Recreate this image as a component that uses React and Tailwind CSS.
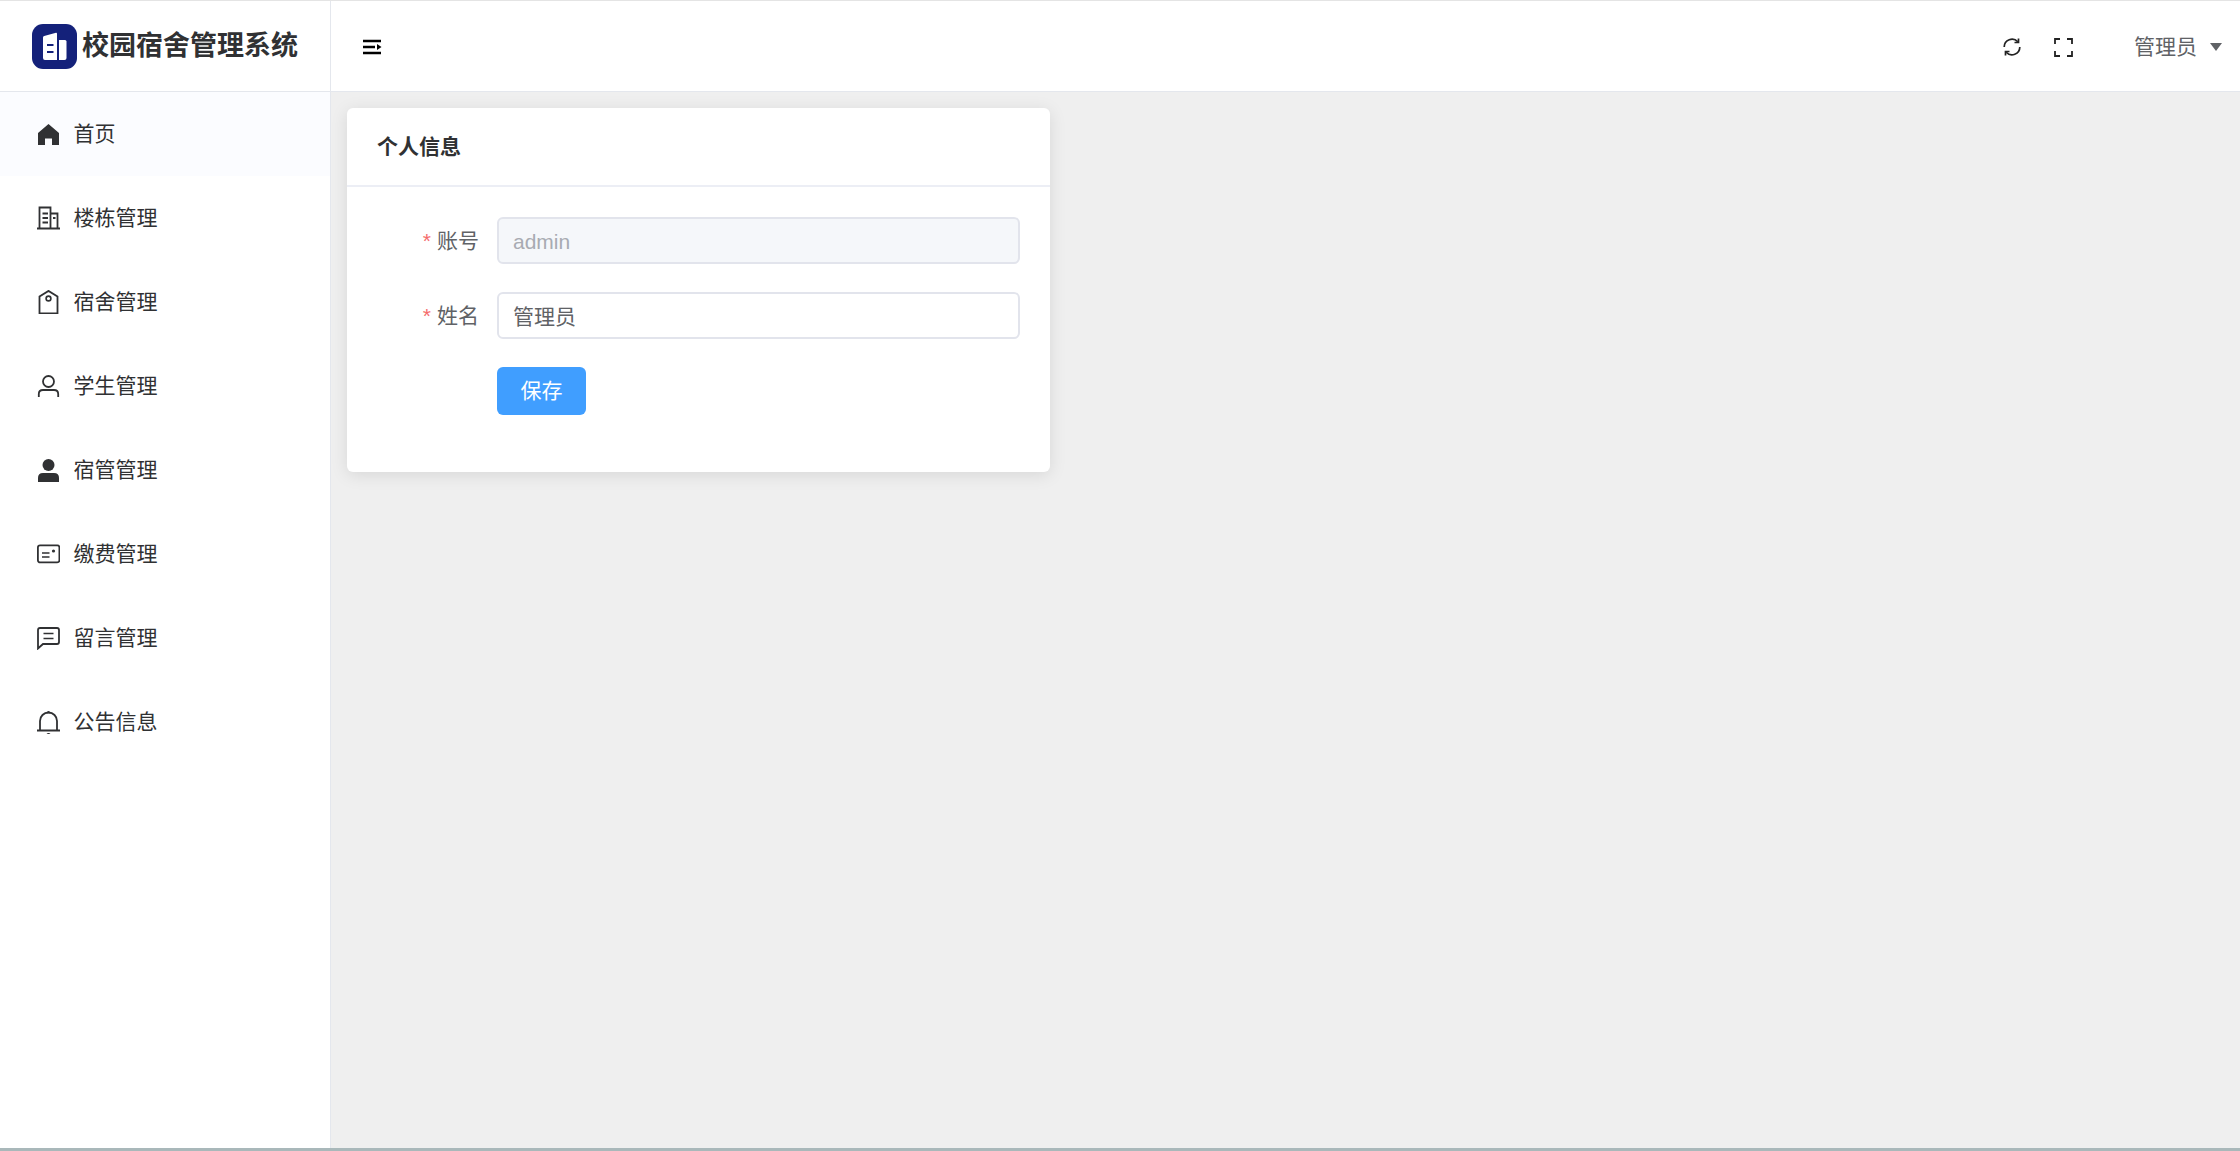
import React from "react";

const Icon = ({ children }) => (
  <svg width="24" height="24" viewBox="0 0 24 24" className="shrink-0 text-[#303133]">
    {children}
  </svg>
);

const line = { fill: "none", stroke: "currentColor", strokeWidth: 1.8 };

const HomeIcon = () => (
  <Icon>
    <path fill="currentColor" d="M12.5 2 L23 11 V23 H16 V16.5 H9 V23 H2 V11 Z" />
  </Icon>
);

const BuildingIcon = () => (
  <Icon>
    <path {...line} strokeWidth="2" d="M1 22.5 H24" />
    <path {...line} d="M3.5 22 V1.5 H14.5 V22 M14.5 7.5 H21.5 V22 M6.5 7.5 H12 M6.5 12 H12 M6.5 16.5 H12 M17 12 H19.5" />
  </Icon>
);

const TagIcon = () => (
  <Icon>
    <path {...line} d="M3.5 23.5 V6.5 L12.5 0.9 L21.5 6.5 V23.5 Z" />
    <circle {...line} strokeWidth="1.6" cx="12.5" cy="8.5" r="2.4" />
  </Icon>
);

const UserIcon = () => (
  <Icon>
    <circle {...line} cx="12.5" cy="7.5" r="5.5" />
    <path {...line} d="M2.8 23 V20 Q2.8 16 7 16 H18 Q22.2 16 22.2 20 V23" />
  </Icon>
);

const UserFilledIcon = () => (
  <Icon>
    <circle fill="currentColor" cx="12.5" cy="7" r="6" />
    <path fill="currentColor" d="M2 24 V20 Q2 15 7 15 H18 Q23 15 23 20 V24 Z" />
  </Icon>
);

const PostcardIcon = () => (
  <Icon>
    <rect {...line} x="1.9" y="3.4" width="21.5" height="17" rx="2.2" />
    <path {...line} strokeWidth="1.6" d="M6 11 H13.5 M6 15 H13.5" />
    <circle fill="currentColor" cx="17.5" cy="9" r="1.6" />
  </Icon>
);

const ChatIcon = () => (
  <Icon>
    <path {...line} d="M2 22.5 V4 Q2 2 4 2 H21 Q23 2 23 4 V16 Q23 18 21 18 H7 Z" />
    <path {...line} strokeWidth="1.6" d="M7.5 7.5 H17.5 M7.5 12.5 H17.5" />
  </Icon>
);

const BellIcon = () => (
  <Icon>
    <path {...line} d="M1 20.5 H24 M4 20.5 V11 A8.5 8.5 0 0 1 21 11 V20.5" />
    <path fill="currentColor" d="M11 2.4 A1.5 1.5 0 0 1 14 2.4 V3.2 H11 Z M10.5 23 H14.5 L12.5 24.5 Z" />
  </Icon>
);

const menus = [
  { name: "首页", icon: <HomeIcon />, active: true },
  { name: "楼栋管理", icon: <BuildingIcon /> },
  { name: "宿舍管理", icon: <TagIcon /> },
  { name: "学生管理", icon: <UserIcon /> },
  { name: "宿管管理", icon: <UserFilledIcon /> },
  { name: "缴费管理", icon: <PostcardIcon /> },
  { name: "留言管理", icon: <ChatIcon /> },
  { name: "公告信息", icon: <BellIcon /> },
];

const Logo = () => (
  <svg width="45" height="45" viewBox="0 0 45 45" className="shrink-0">
    <rect width="45" height="45" rx="11" fill="#14217a" />
    <path fill="#fff" d="M11 13.5 Q11 12.3 12.2 12 L24 8.8 Q25 8.6 25 9.8 V36 H13 Q11 36 11 34 Z" />
    <path fill="#fff" d="M27 16 H33 Q34.5 16 34.5 17.5 V34 Q34.5 36 32.5 36 H27 Z" />
    <path stroke="#14217a" strokeWidth="2" d="M15 21 H21.5 M15 28 H21.5" />
  </svg>
);

const Field = ({ label, value, disabled }) => (
  <div className="flex items-center">
    <label className="w-[120px] pr-[18px] text-right text-[21px] text-[#606266]">
      <span className="text-[#f56c6c] mr-[6px]">*</span>
      {label}
    </label>
    <input
      readOnly
      disabled={disabled}
      value={value}
      className={`w-[523px] h-[47px] px-[14px] text-[21px] rounded-[6px] border-2 border-[#e2e4ec] outline-none ${
        disabled ? "bg-[#f5f7fa] text-[#a8abb2] pt-[2px]" : "bg-white text-[#606266] pb-[2px]"
      }`}
    />
  </div>
);

const App = () => {
  return (
    <div className="h-screen flex flex-col overflow-hidden bg-white font-['Liberation_Sans','Noto_Sans_CJK_SC',sans-serif]">
      <div className="h-px bg-[#e4e4e4] shrink-0" />

      <header className="h-[91px] shrink-0 flex bg-white border-b border-[#e4e7ed]">
        <div className="w-[331px] shrink-0 flex items-center pl-[32px] gap-[5px] border-r-[1.5px] border-[#e4e7ed]">
          <Logo />
          <span className="text-[27px] font-bold text-[#303133] whitespace-nowrap">校园宿舍管理系统</span>
        </div>
        <div className="flex-1 flex items-center pl-[32px] pr-[18px] pt-[2px]">
          <svg width="19" height="16" viewBox="0 0 19 16" className="text-black">
            <path stroke="currentColor" strokeWidth="2.5" fill="none" d="M0 2 H18 M0 14 H18" />
            <path stroke="currentColor" strokeWidth="2.5" fill="none" d="M0 8 H12" />
            <path fill="currentColor" d="M14 5 L18.5 8 L14 11 Z" />
          </svg>
          <div className="ml-auto flex items-center">
            <svg width="18" height="18" viewBox="0 0 18 18" fill="none" stroke="#222" strokeWidth="1.7">
              <path d="M1.2 9 A7.8 7.8 0 0 1 14.8 3.8" />
              <path d="M16.8 9 A7.8 7.8 0 0 1 3.2 14.2" />
              <path d="M15.5 0.5 V4.5 H11.5 M2.5 17.5 V13.5 H6.5" />
            </svg>
            <svg width="19" height="19" viewBox="0 0 19 19" fill="none" stroke="#222" strokeWidth="1.8" className="ml-[33px]">
              <path d="M1 6 V1 H6 M13 1 H18 V6 M18 13 V18 H13 M6 18 H1 V13" />
            </svg>
            <span className="ml-[61px] text-[21px] text-[#606266] whitespace-nowrap">管理员</span>
            <span className="ml-[13px] w-0 h-0 border-x-[6.5px] border-x-transparent border-t-[8px] border-t-[#606266]" />
          </div>
        </div>
      </header>

      <div className="flex-1 min-h-0 flex">
        <aside className="w-[331px] shrink-0 bg-white border-r-[1.5px] border-[#e4e7ed]">
          {menus.map((menu) => (
            <div
              key={menu.name}
              className={`h-[84px] flex items-center pl-[36px] gap-[13.5px] text-[21px] text-[#303133] ${
                menu.active ? "bg-[#fbfcff]" : ""
              }`}
            >
              {menu.icon}
              <span>{menu.name}</span>
            </div>
          ))}
        </aside>

        <main className="flex-1 bg-[#efefef] pt-[16px] pl-[16px]">
          <div className="w-[703px] bg-white rounded-[6px] shadow-[0_3px_17px_rgba(0,0,0,0.1)]">
            <div className="h-[79px] pl-[30px] flex items-center border-b-2 border-[#eceef5] text-[21px] font-bold text-[#303133]">
              个人信息
            </div>
            <div className="px-[30px] pt-[30px] pb-[57px] flex flex-col gap-[28px]">
              <Field label="账号" value="admin" disabled />
              <Field label="姓名" value="管理员" />
              <div className="pl-[120px]">
                <button className="w-[89px] h-[48px] rounded-[6px] bg-[#409eff] text-white text-[21px]">保存</button>
              </div>
            </div>
          </div>
        </main>
      </div>

      <div className="h-[3px] shrink-0 bg-[#a9b8ba]" />
    </div>
  );
};

export default App;
